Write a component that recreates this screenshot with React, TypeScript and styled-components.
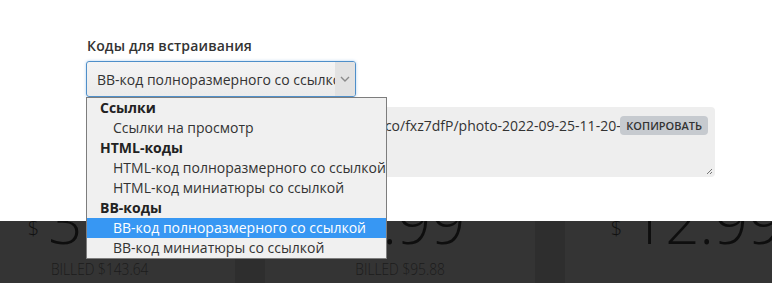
import React from 'react'
import styled, { createGlobalStyle } from 'styled-components'

const GlobalStyle = createGlobalStyle`
  html, body {
    margin: 0;
    padding: 0;
    background: #ffffff;
    font-family: 'Open Sans', 'Noto Sans', sans-serif;
    color: #333;
  }
`

const groups = [
  { label: 'Ссылки', options: ['Ссылки на просмотр'] },
  {
    label: 'HTML-коды',
    options: ['HTML-код полноразмерного со ссылкой', 'HTML-код миниатюры со ссылкой'],
  },
  {
    label: 'BB-коды',
    options: ['BB-код полноразмерного со ссылкой', 'BB-код миниатюры со ссылкой'],
  },
]

const selected = 'BB-код полноразмерного со ссылкой'

const plans = [
  { price: '3.99', billed: 'BILLED $143.64' },
  { price: '7.99', billed: 'BILLED $95.88' },
  { price: '12.99', billed: '' },
]

const embedCode =
  '[url=https://ibb.co/K5Xq2r][img]https://i.ibb.co/fxz7dfP/photo-2022-09-25-11-20-44.jpg[/img][/url]'

export default function App() {
  return (
    <>
      <GlobalStyle />
      <Page>
        <Embed>
          <Label>Коды для встраивания</Label>
          <SelectWrap>
            <SelectBox>
              <SelectValue>{selected}</SelectValue>
              <Arrow>
                <svg width="10" height="6" viewBox="0 0 10 6">
                  <path d="M1 1l4 4 4-4" fill="none" stroke="#8a8a8a" strokeWidth="1.4" />
                </svg>
              </Arrow>
            </SelectBox>
            <Dropdown>
              {groups.map((g) => (
                <React.Fragment key={g.label}>
                  <GroupLabel>{g.label}</GroupLabel>
                  {g.options.map((o) => (
                    <Option key={o} $active={o === selected}>
                      {o}
                    </Option>
                  ))}
                </React.Fragment>
              ))}
            </Dropdown>
          </SelectWrap>
          <CodeBox>
            <CodeText>{embedCode}</CodeText>
            <CopyButton>Копировать</CopyButton>
            <Grip>
              <svg width="8" height="8" viewBox="0 0 8 8">
                <path d="M7 2L2 7M7 5L5 7" stroke="#777" strokeWidth="1" />
              </svg>
            </Grip>
          </CodeBox>
        </Embed>
        <Pricing>
          <PlanRow>
            {plans.map((p) => (
              <Plan key={p.price}>
                <Price>
                  <Dollar>$</Dollar>
                  {p.price}
                </Price>
                <Billed>{p.billed}</Billed>
              </Plan>
            ))}
          </PlanRow>
        </Pricing>
      </Page>
    </>
  )
}

const Page = styled.div`
  width: 772px;
  height: 283px;
  overflow: hidden;
  display: flex;
  flex-direction: column;
`

const Embed = styled.div`
  height: 221px;
  padding: 36px 0 0 86px;
  box-sizing: border-box;
  position: relative;
  z-index: 2;
  background: #fff;
`

const Label = styled.div`
  font-size: 14px;
  font-weight: 600;
  line-height: 20px;
  color: #333;
  padding-left: 1px;
  margin-bottom: 5px;
  letter-spacing: 0.15px;
`

const SelectWrap = styled.div`
  position: relative;
  width: 270px;
  z-index: 3;
`

const SelectBox = styled.div`
  height: 36px;
  box-sizing: border-box;
  border: 1px solid #4f8fc9;
  border-radius: 3px;
  box-shadow: 0 0 3px rgba(80, 150, 220, 0.45);
  background: linear-gradient(#f4f4f4, #ebebeb);
  display: flex;
  align-items: center;
  overflow: hidden;
`

const SelectValue = styled.div`
  flex: 1;
  padding-left: 10px;
  font-size: 14px;
  color: #333;
  white-space: nowrap;
  overflow: hidden;
`

const Arrow = styled.div`
  width: 20px;
  align-self: stretch;
  background: #e2e2e2;
  display: flex;
  align-items: center;
  justify-content: center;
`

const Dropdown = styled.div`
  position: absolute;
  top: 36px;
  left: 0;
  width: 301px;
  box-sizing: border-box;
  border: 1px solid #7d7d7d;
  background: #f0f0f0;
`

const GroupLabel = styled.div`
  height: 20px;
  line-height: 20px;
  padding-left: 13px;
  font-size: 14px;
  font-weight: 700;
  color: #222;
`

const Option = styled.div<{ $active?: boolean }>`
  height: 20px;
  line-height: 20px;
  padding-left: 26px;
  font-size: 14px;
  white-space: nowrap;
  color: ${(p) => (p.$active ? '#fff' : '#333')};
  background: ${(p) => (p.$active ? '#3797f3' : 'transparent')};
`

const CodeBox = styled.div`
  position: relative;
  margin-top: 10px;
  width: 629px;
  height: 70px;
  border-radius: 4px;
  background: #eeeeee;
  padding: 9px 92px 0 12px;
  box-sizing: border-box;
`

const CodeText = styled.div`
  font-size: 14px;
  line-height: 20px;
  color: #333;
  white-space: nowrap;
  overflow: hidden;
`

const CopyButton = styled.button`
  position: absolute;
  top: 9px;
  right: 7px;
  height: 19px;
  padding: 0 6px;
  border: none;
  border-radius: 4px;
  background: #c6cacf;
  color: #333;
  font-family: 'Open Sans', sans-serif;
  font-size: 11px;
  font-weight: 600;
  text-transform: uppercase;
  line-height: 19px;
`

const Grip = styled.div`
  position: absolute;
  right: 2px;
  bottom: 2px;
  width: 8px;
  height: 8px;
  display: flex;
`

const Pricing = styled.div`
  flex: 1;
  background: #2e2e2e;
  overflow: hidden;
`

const PlanRow = styled.div`
  display: grid;
  grid-template-columns: repeat(3, 270px);
  column-gap: 30px;
  margin-left: -35px;
  height: 100%;
`

const Plan = styled.div`
  background: #343434;
  display: flex;
  flex-direction: column;
  align-items: center;
`

const Price = styled.div`
  margin-top: -30px;
  font-size: 60px;
  font-weight: 300;
  line-height: 60px;
  color: #0e0e0e;
  display: flex;
  align-items: flex-start;
`

const Dollar = styled.span`
  font-size: 20px;
  line-height: 20px;
  margin: 28px 9px 0 -7px;
  color: #111;
`

const Billed = styled.div`
  margin-top: 7px;
  font-size: 16px;
  font-weight: 300;
  color: #1c1c1c;
  text-transform: uppercase;
  transform: scaleX(0.86);
  white-space: nowrap;
`
